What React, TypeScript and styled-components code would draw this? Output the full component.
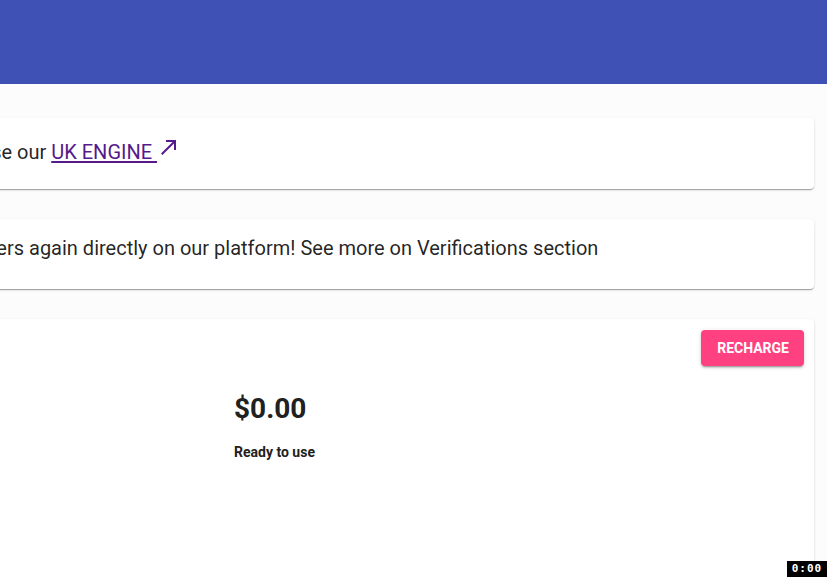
import React from "react";
import styled, { createGlobalStyle } from "styled-components";

const GlobalStyle = createGlobalStyle`
  html, body {
    margin: 0;
    padding: 0;
    background: #fcfcfc;
    font-family: Roboto, "Noto Sans", "Liberation Sans", sans-serif;
    color: rgba(0, 0, 0, 0.87);
    overflow: hidden;
  }
  * { box-sizing: border-box; }
`;

const Page = styled.div`
  min-height: 577px;
  background: #fcfcfc;
`;

const TopBar = styled.header`
  height: 84px;
  background: #3f51b5;
`;

const Main = styled.main`
  margin: 34px 13px 0 -304px;
  display: flex;
  flex-direction: column;
  gap: 30px;
`;

const Card = styled.section<{ $pad?: string; $minHeight?: number }>`
  background: #fff;
  border-radius: 4px;
  box-shadow: 0px 2px 1px -1px rgba(0, 0, 0, 0.2),
    0px 1px 1px 0px rgba(0, 0, 0, 0.14), 0px 1px 3px 0px rgba(0, 0, 0, 0.12);
  padding: ${(p) => p.$pad ?? "16px"};
  min-height: ${(p) => (p.$minHeight ? `${p.$minHeight}px` : "auto")};
`;

const Message = styled.p<{ $indent?: number }>`
  margin: 0;
  font-size: 20px;
  line-height: 30px;
  font-weight: 400;
  white-space: nowrap;
  text-indent: ${(p) => p.$indent ?? 0}px;
`;

const EngineLink = styled.a`
  color: #551a8b;
  text-decoration: underline;
  text-underline-offset: 2px;
`;

const ArrowIcon = styled.svg`
  display: inline-block;
  width: 24px;
  height: 24px;
  vertical-align: top;
  margin-top: -2px;
  fill: #551a8b;
`;

const CardTop = styled.div`
  display: flex;
  justify-content: flex-end;
`;

const RechargeButton = styled.button`
  height: 36px;
  padding: 0 15px 0 16px;
  border: none;
  border-radius: 4px;
  background: #ff4081;
  color: #fff;
  font-family: Roboto, "Liberation Sans", sans-serif;
  font-size: 14px;
  font-weight: 700;
  letter-spacing: 0;
  text-transform: uppercase;
  box-shadow: 0px 3px 1px -2px rgba(0, 0, 0, 0.2),
    0px 2px 2px 0px rgba(0, 0, 0, 0.14), 0px 1px 5px 0px rgba(0, 0, 0, 0.12);
  cursor: pointer;
`;

const BalanceGrid = styled.div`
  display: grid;
  grid-template-columns: 522px 1fr;
  margin-top: 26px;
`;

const SideTitle = styled.h3`
  margin: 0;
  font-size: 20px;
  font-weight: 500;
`;

const BalanceBlock = styled.div`
  display: flex;
  flex-direction: column;
  gap: 16px;
`;

const Amount = styled.div`
  font-size: 28px;
  line-height: 33.6px;
  font-weight: 700;
  color: #212121;
`;

const Status = styled.div`
  font-size: 14px;
  line-height: 20px;
  font-weight: 700;
  color: #212121;
`;

const Timer = styled.div`
  position: fixed;
  right: 0;
  bottom: 0;
  width: 40px;
  height: 16px;
  background: #000;
  color: #fff;
  font-family: "DejaVu Sans Mono", monospace;
  font-size: 11px;
  font-weight: 700;
  line-height: 16px;
  text-align: center;
  letter-spacing: 1px;
`;

export default function App() {
  return (
    <>
      <GlobalStyle />
      <Page>
        <TopBar />
        <Main>
          <Card $pad="19px 16px 22px">
            <Message $indent={-10}>
              To verify UK customers, please use our{" "}
              <EngineLink href="#">UK ENGINE </EngineLink>
              <ArrowIcon viewBox="0 0 24 24" aria-hidden="true">
                <path d="M9 5v2h6.59L4 18.59 5.41 20 17 8.41V15h2V5z" />
              </ArrowIcon>
            </Message>
          </Card>
          <Card $pad="14px 16px 26px">
            <Message $indent={2}>
              You can now verify your customers again directly on our platform! See
              more on Verifications section
            </Message>
          </Card>
          <Card $pad="11px 10px 16px 16px" $minHeight={300}>
            <CardTop>
              <RechargeButton>Recharge</RechargeButton>
            </CardTop>
            <BalanceGrid>
              <SideTitle>Credits</SideTitle>
              <BalanceBlock>
                <Amount>$0.00</Amount>
                <Status>Ready to use</Status>
              </BalanceBlock>
            </BalanceGrid>
          </Card>
        </Main>
      </Page>
      <Timer>0:00</Timer>
    </>
  );
}
